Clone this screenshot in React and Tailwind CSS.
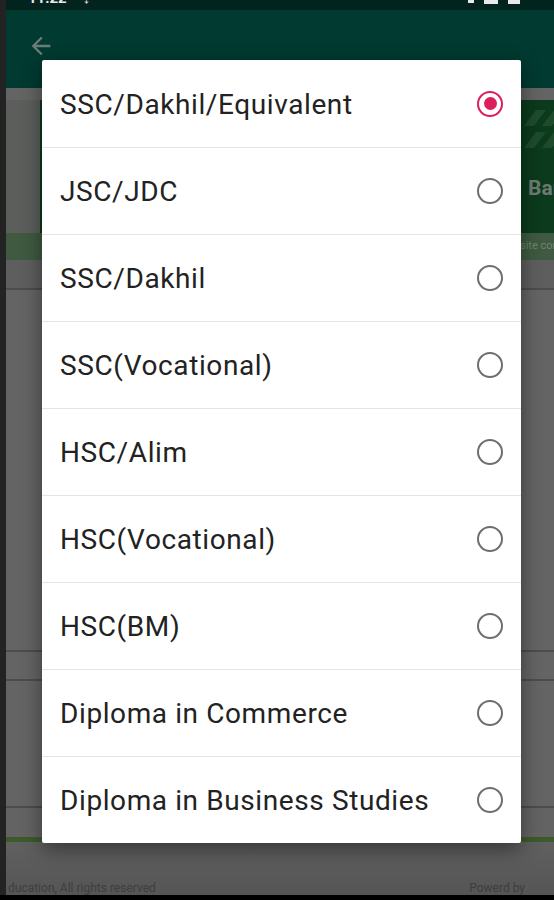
import React from 'react';

const options = [
  'SSC/Dakhil/Equivalent',
  'JSC/JDC',
  'SSC/Dakhil',
  'SSC(Vocational)',
  'HSC/Alim',
  'HSC(Vocational)',
  'HSC(BM)',
  'Diploma in Commerce',
  'Diploma in Business Studies',
];

const Radio = ({ checked }) =>
  checked ? (
    <span className="w-[26px] h-[26px] shrink-0 rounded-full border-2 border-[#dc1f5a] flex items-center justify-center">
      <span className="w-[13px] h-[13px] rounded-full bg-[#dc1f5a]" />
    </span>
  ) : (
    <span className="w-[26px] h-[26px] shrink-0 rounded-full border-2 border-[#6e6e6e]" />
  );

const App = () => {
  const selected = 0;

  return (
    <div className="relative w-[554px] h-[900px] flex bg-black overflow-hidden" style={{ fontFamily: 'Roboto, "Noto Sans", sans-serif' }}>
      {/* left edge strip */}
      <div className="w-[6px] shrink-0 h-[895px] bg-[#232323]" />

      {/* dimmed app behind the dialog */}
      <div className="w-[548px] min-w-0 shrink-0 h-[895px] flex flex-col bg-[#626262] overflow-hidden">
        {/* status bar */}
        <div className="h-[10px] shrink-0 bg-[#03241e] overflow-hidden flex items-start justify-between pl-[22px] pr-[34px]">
          <div className="flex items-start gap-[16px] text-[#e8e8e8] text-[15px] font-bold leading-none -translate-y-[9px]">
            <span>11:22</span>
            <span>↓</span>
          </div>
          <div className="flex items-start gap-[10px] -translate-y-[2px]">
            <span className="w-[6px] h-[5px] bg-[#e8e8e8]" />
            <span className="w-[14px] h-[6px] bg-[#e8e8e8]" />
            <span className="w-[12px] h-[6px] bg-[#e8e8e8]" />
          </div>
        </div>

        {/* app bar */}
        <div className="h-[78px] shrink-0 bg-[#003a30] pl-[21px] pt-[22px]">
          <svg width="28" height="28" viewBox="0 0 24 24" fill="#6c7c78">
            <path d="M20 11H7.83l5.59-5.59L12 4l-8 8 8 8 1.41-1.41L7.83 13H20v-2z" />
          </svg>
        </div>

        <div className="h-[12px] shrink-0 bg-[#646464]" />

        {/* banner */}
        <div className="h-[133px] shrink-0 bg-[#5c5e5c] pl-[34px] overflow-hidden">
          <div className="h-full bg-[#0b3a1c] flex flex-col pl-[480px] overflow-hidden">
            <svg width="40" height="48" viewBox="0 0 40 48" className="mt-[4px] shrink-0">
              <path d="M4 22 L16 6 L26 6 L14 22 Z" fill="#1f4b2c" />
              <path d="M22 22 L34 6 L44 6 L32 22 Z" fill="#1f4b2c" />
              <path d="M4 44 L16 28 L26 28 L14 44 Z" fill="#1f4b2c" />
              <path d="M22 44 L34 28 L44 28 L32 44 Z" fill="#1f4b2c" />
            </svg>
            <span className="mt-[26px] pl-[8px] text-[21px] font-bold text-[#6e7c70] whitespace-nowrap leading-none">Bangladesh</span>
          </div>
        </div>
        <div className="h-[27px] shrink-0 bg-[#3f5a41] pl-[514px] flex items-center overflow-hidden">
          <span className="text-[11px] text-[#6f836f] whitespace-nowrap">site contents</span>
        </div>

        <div className="h-[30px] shrink-0 bg-[#5e5e5e] border-b-2 border-[#4c4c4c]" />
        <div className="h-[362px] shrink-0 bg-[#646464] border-b-2 border-[#4c4c4c]" />
        <div className="h-[29px] shrink-0 bg-[#646464] border-b-2 border-[#4c4c4c]" />
        <div className="h-[127px] shrink-0 bg-[#646464] border-b-2 border-[#4c4c4c]" />
        <div className="h-[29px] shrink-0 bg-[#636363]" />
        <div className="h-[5px] shrink-0 bg-[#3c5a2c]" />

        {/* footer */}
        <div className="flex-1 bg-linear-to-b from-[#606060] to-[#555555] flex items-end justify-between pl-[2px] pr-[29px] pb-[1px]">
          <span className="text-[12px] text-[#3e3e3e] leading-none whitespace-nowrap">ducation, All rights reserved</span>
          <span className="text-[12px] text-[#3e3e3e] leading-none whitespace-nowrap">Powerd by</span>
        </div>
      </div>

      {/* dialog */}
      <div className="absolute left-[42px] top-[60px] w-[479px] bg-white rounded-[2px] shadow-[0_6px_20px_rgba(0,0,0,0.45)] flex flex-col">
        {options.map((label, i) => (
          <div
            key={label}
            className={`h-[87px] flex items-center justify-between pl-[18px] pr-[18px] ${i > 0 ? 'border-t border-[#e4e4e4]' : ''}`}
          >
            <span className="text-[28px] tracking-[0.6px] text-[#222222] leading-none pt-[2px] whitespace-nowrap">{label}</span>
            <Radio checked={i === selected} />
          </div>
        ))}
      </div>
    </div>
  );
};

export default App;
